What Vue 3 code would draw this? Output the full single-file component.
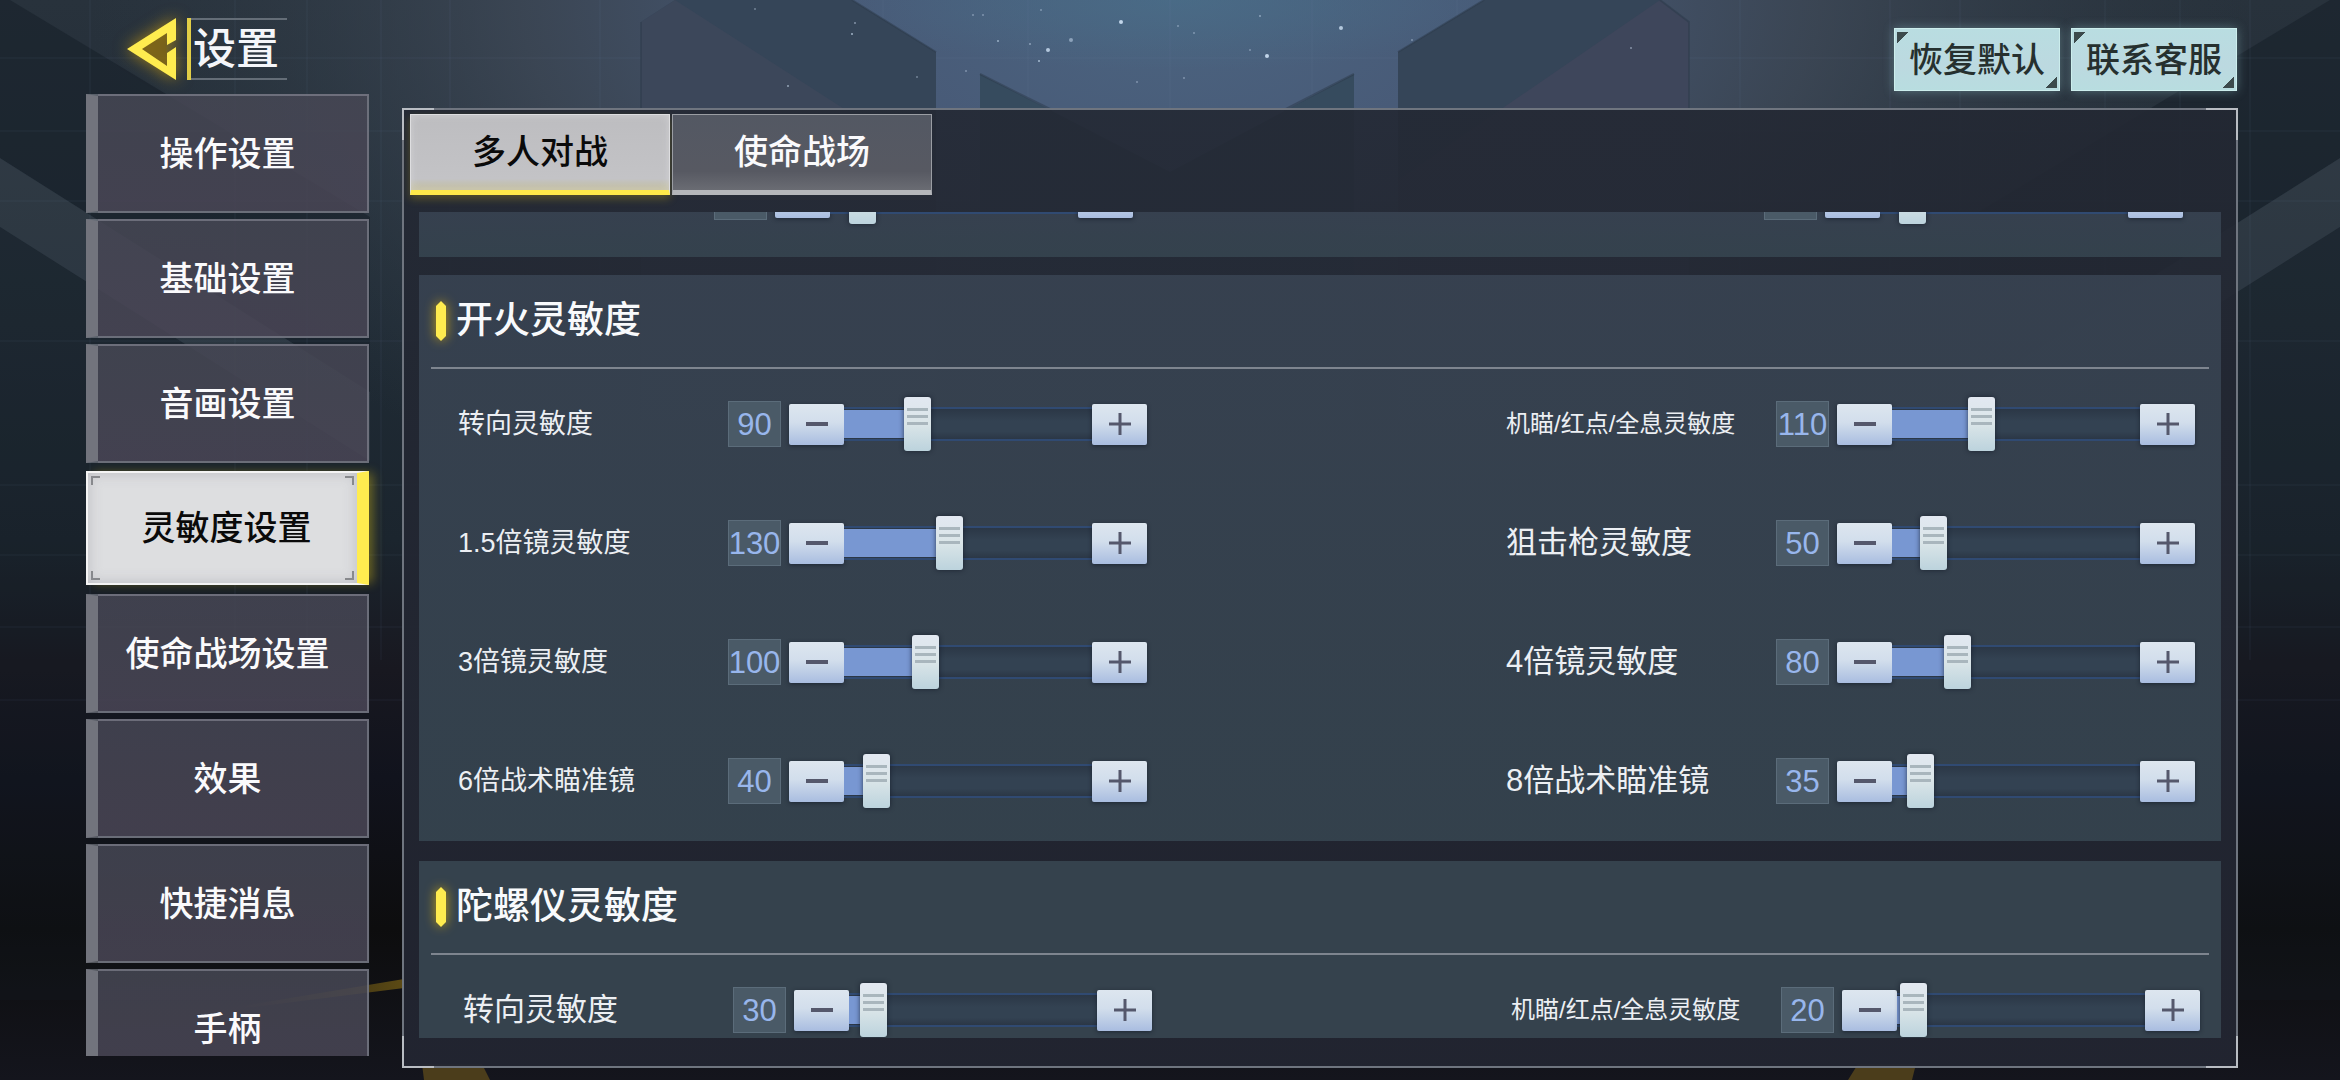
<script setup>
import { reactive, ref } from 'vue'

const MAX = 300

const menu = ['操作设置', '基础设置', '音画设置', '灵敏度设置', '使命战场设置', '效果', '快捷消息', '手柄']
const activeMenu = ref('灵敏度设置')

const tabs = ['多人对战', '使命战场']
const activeTab = ref('多人对战')

const sections = reactive([
  {
    id: 'aim',
    title: '',
    rows: [
      { label: '', value: 40, size: 'md' },
      { label: '', value: 40, size: 'md' }
    ]
  },
  {
    id: 'fire',
    title: '开火灵敏度',
    rows: [
      { label: '转向灵敏度', value: 90, size: 'md' },
      { label: '机瞄/红点/全息灵敏度', value: 110, size: 'sm' },
      { label: '1.5倍镜灵敏度', value: 130, size: 'md' },
      { label: '狙击枪灵敏度', value: 50, size: 'lg' },
      { label: '3倍镜灵敏度', value: 100, size: 'md' },
      { label: '4倍镜灵敏度', value: 80, size: 'lg' },
      { label: '6倍战术瞄准镜', value: 40, size: 'md' },
      { label: '8倍战术瞄准镜', value: 35, size: 'lg' }
    ]
  },
  {
    id: 'gyro',
    title: '陀螺仪灵敏度',
    rows: [
      { label: '转向灵敏度', value: 30, size: 'lg' },
      { label: '机瞄/红点/全息灵敏度', value: 20, size: 'sm' }
    ]
  }
])

const stars = [
  [1121, 22, 2, 0.9], [1341, 28, 2, 0.8], [1267, 56, 2, 0.9], [1048, 50, 2, 0.8], [1071, 40, 2, 0.5],
  [1039, 61, 1, 0.7], [998, 41, 1, 0.6], [1030, 44, 1, 0.5], [852, 34, 1, 0.7], [855, 23, 1, 0.5],
  [788, 86, 1, 0.6], [1260, 16, 1, 0.5], [1178, 26, 1, 0.4], [1194, 33, 1, 0.4], [1250, 50, 1, 0.4],
  [966, 71, 1, 0.4], [1137, 82, 1, 0.4], [1184, 78, 1, 0.4], [1631, 48, 1, 0.5], [983, 15, 1, 0.4],
  [973, 15, 1, 0.4], [1041, 10, 1, 0.4], [1412, 40, 1, 0.4], [755, 9, 1, 0.4], [917, 77, 1, 0.4]
]
const gridX = [90, 235, 307, 381, 450, 600, 740, 883, 1028, 1170, 1312, 1457, 1600, 1740, 1890, 1960, 2105, 2180, 2250]
const gridY = [58, 131, 201, 341, 485, 555, 627, 700]

function step(row, by) {
  row.value = Math.min(MAX, Math.max(0, row.value + by))
}
</script>

<template>
  <div class="page">
    <svg class="scene" viewBox="0 0 2340 1080" preserveAspectRatio="none" aria-hidden="true">
      <defs>
        <linearGradient id="base" x1="0" y1="0" x2="0" y2="1">
          <stop offset="0" stop-color="#28323c" />
          <stop offset="0.3" stop-color="#202b35" />
          <stop offset="0.5" stop-color="#1b252e" />
          <stop offset="0.62" stop-color="#181820" />
          <stop offset="0.72" stop-color="#11131d" />
          <stop offset="0.86" stop-color="#0d0d0e" />
          <stop offset="1" stop-color="#14151d" />
        </linearGradient>
        <radialGradient id="glow" gradientUnits="userSpaceOnUse" cx="0" cy="0" r="1" gradientTransform="translate(1170 0) scale(1080 600)">
          <stop offset="0" stop-color="#4b6480" />
          <stop offset="0.3" stop-color="#485a77" />
          <stop offset="0.6" stop-color="#3f4a59" stop-opacity="0.8" />
          <stop offset="1" stop-color="#303c47" stop-opacity="0" />
        </radialGradient>
        <radialGradient id="sky">
          <stop offset="0" stop-color="#486f8a" stop-opacity="0.6" />
          <stop offset="1" stop-color="#486f8a" stop-opacity="0" />
        </radialGradient>
        <linearGradient id="streak" x1="0" y1="0" x2="1" y2="0">
          <stop offset="0" stop-color="#5c4a14" stop-opacity="0" />
          <stop offset="1" stop-color="#5c4a14" />
        </linearGradient>
      </defs>
      <rect width="2340" height="1080" fill="url(#base)" />
      <rect width="2340" height="600" fill="url(#glow)" />
      <ellipse cx="1180" cy="0" rx="360" ry="70" fill="url(#sky)" />
      <g fill="#161f28" fill-opacity="0.55">
        <path d="M0 0 10 0 370 217 370 392 0 158z" />
        <path d="M2340 0 2330 0 1970 217 1970 392 2340 158z" />
      </g>
      <g fill="#4a5660" fill-opacity="0.28">
        <path d="M0 158 370 392V461L0 227z" />
        <path d="M2340 158 1970 392V461L2340 227z" />
      </g>
      <path d="M0 227 370 461V1000H0z M2340 227 1970 461V1000H2340z" fill="#141b24" fill-opacity="0.25" />
      <g stroke="#6d8fb0" stroke-opacity="0.05" stroke-width="2">
        <path v-for="x in gridX" :key="'x' + x" :d="`M${x} 0V660`" />
        <path v-for="y in gridY" :key="'y' + y" :d="`M0 ${y}H2340`" />
      </g>
      <path d="M641 22 675 0H852L936 52V420H641z" fill="#354558" />
      <path d="M641 22 675 0 936 168V420H641z" fill="#3c475a" />
      <path d="M1689 22 1660 0H1484L1398 52V420H1689z" fill="#354558" />
      <path d="M1689 22 1660 0 1398 180V420H1689z" fill="#3e465b" />
      <path d="M980 74 1170 172 1354 74V420H980z" fill="#364b5e" />
      <g fill="none" stroke="#2c394a" stroke-width="2" stroke-opacity="0.5">
        <path d="M641 22V110M852 0 936 52" />
        <path d="M1689 110V22L1660 0M1484 0 1398 52" />
        <path d="M980 74 1052 110M1354 74 1284 110" />
      </g>
      <circle v-for="(s, i) in stars" :key="i" :cx="s[0]" :cy="s[1]" :r="s[2]" fill="#cfe2f5" :fill-opacity="s[3]" />
      <path d="M230 1008 404 979V988L230 1010z" fill="url(#streak)" />
      <path d="M422 1064H482L490 1080H424z M1858 1064H1916L1912 1080H1848z" fill="#4b3d1b" />
    </svg>

    <header class="top">
      <h1 class="heading">
        <button class="back" type="button" aria-label="返回">
          <svg width="50" height="62" viewBox="0 0 50 62" aria-hidden="true">
            <path d="M39 15 14 31 40 48z" fill="#7a6012" fill-opacity="0.6" />
            <path d="M49 0V22L40 27V15L15 31 40 48V35L49 29V62L0 31z" fill="#ffec4f" />
          </svg>
        </button>
        <span class="title">设置</span>
      </h1>
      <div class="actions">
        <button class="action" type="button">恢复默认</button>
        <button class="action" type="button">联系客服</button>
      </div>
    </header>

    <nav class="side">
      <button
        v-for="item in menu"
        :key="item"
        type="button"
        :class="['side-item', { active: item === activeMenu }]"
        @click="activeMenu = item"
      >{{ item }}</button>
    </nav>

    <main class="panel">
      <div class="tabs" role="tablist">
        <button
          v-for="tab in tabs"
          :key="tab"
          type="button"
          role="tab"
          :aria-selected="tab === activeTab"
          :class="['tab', { active: tab === activeTab }]"
          @click="activeTab = tab"
        >{{ tab }}</button>
      </div>

      <div class="scroll">
        <section v-for="s in sections" :key="s.id" :class="['card', s.id]">
          <h2 v-if="s.title" class="card-title">
            <svg class="mark" width="10" height="40" viewBox="0 0 10 40" aria-hidden="true">
              <path d="M5 0 10 5V35L5 40 0 35V5z" fill="#ffec4f" />
            </svg>
            <span>{{ s.title }}</span>
          </h2>
          <div class="rows">
            <div v-for="(row, i) in s.rows" :key="i" class="row">
              <label :class="['name', row.size]" :for="`${s.id}-${i}`">{{ row.label }}</label>
              <output class="value" :for="`${s.id}-${i}`">{{ s.title ? row.value : '' }}</output>
              <div class="control">
                <button class="step" type="button" aria-label="减少" @click="step(row, -1)">
                  <svg width="22" height="22" viewBox="0 0 22 22" aria-hidden="true">
                    <path d="M0 11H22" stroke="#55586c" stroke-width="4" />
                  </svg>
                </button>
                <div class="track">
                  <div class="fill" :style="{ width: (row.value / 306) * 100 + '%' }"></div>
                  <input
                    :id="`${s.id}-${i}`"
                    v-model.number="row.value"
                    class="range"
                    type="range"
                    min="0"
                    :max="MAX"
                  />
                </div>
                <button class="step" type="button" aria-label="增加" @click="step(row, 1)">
                  <svg width="22" height="22" viewBox="0 0 22 22" aria-hidden="true">
                    <path d="M0 11H22M11 0V22" stroke="#55586c" stroke-width="3" />
                  </svg>
                </button>
              </div>
            </div>
          </div>
        </section>
      </div>
    </main>
  </div>
</template>

<style>
body {
  background: #14171f;
}
</style>

<style scoped>
.page {
  position: relative;
  box-sizing: border-box;
  height: 100vh;
  padding: 0 102px 12px 86px;
  display: grid;
  grid-template-columns: 283px minmax(0, 1fr);
  grid-template-rows: 94px minmax(0, 1fr);
  column-gap: 33px;
  overflow: hidden;
  color: #f4f6fa;
  font-family: "Liberation Sans", "Noto Sans CJK SC", sans-serif;
}

.page button {
  box-sizing: border-box;
  margin: 0;
  padding: 0;
  border: 0;
  font-family: inherit;
  cursor: pointer;
}

.scene {
  position: absolute;
  inset: 0;
  width: 100%;
  height: 100%;
}

.top,
.side,
.panel {
  position: relative;
}

/* Header */
.top {
  grid-column: 1 / -1;
  display: flex;
  justify-content: space-between;
  align-items: flex-start;
}

.heading {
  display: flex;
  gap: 10px;
  margin: 18px 0 0 41px;
}

.page .back {
  display: flex;
  background: none;
  filter: drop-shadow(0 0 8px rgba(255, 190, 0, 0.6));
}

.title {
  box-sizing: border-box;
  width: 100px;
  height: 62px;
  padding-left: 2px;
  border-left: 4px solid #e2cf48;
  background:
    linear-gradient(#646d77, #646d77) top / 100% 2px no-repeat,
    linear-gradient(#646d77, #646d77) bottom / 100% 2px no-repeat;
  font-size: 43px;
  font-weight: 500;
  line-height: 62px;
}

.actions {
  display: flex;
  gap: 11px;
  margin-top: 28px;
  margin-right: 1px;
}

.page .action {
  width: 166px;
  height: 63px;
  border: 1px solid #cdeeed;
  background:
    linear-gradient(135deg, #3c4a4c 50%, transparent 51%) 2px 3px / 11px 11px no-repeat,
    linear-gradient(315deg, #3c4a4c 50%, transparent 51%) calc(100% - 2px) calc(100% - 2px) / 11px 11px no-repeat,
    linear-gradient(#b9dde1, #bcd9e0 60%, #b8dde0);
  box-shadow: 0 0 10px rgba(150, 200, 205, 0.4);
  color: #26302f;
  font-size: 34px;
  font-weight: 500;
  line-height: 60px;
}

/* Side menu */
.side {
  display: flex;
  flex-direction: column;
  gap: 6px;
  margin-bottom: 12px;
  overflow: hidden;
  margin-right: -20px;
  padding-right: 20px;
}

.page .side-item {
  flex: 0 0 119px;
  border: 2px solid rgba(150, 155, 165, 0.5);
  border-left: 12px solid #72747d;
  background: linear-gradient(rgba(70, 71, 84, 0.85), rgba(74, 70, 86, 0.85));
  color: #fafafc;
  font-size: 34px;
  font-weight: 500;
  line-height: 108px;
  padding-right: 10px;
}

.page .side-item.active {
  flex-basis: 114px;
  margin: 2px 0 3px;
  border: 2px solid #f4f4f4;
  border-right: 12px solid #ffec4f;
  background:
    linear-gradient(#85878a, #85878a) 3px 3px / 9px 2px no-repeat,
    linear-gradient(#85878a, #85878a) 3px 3px / 2px 9px no-repeat,
    linear-gradient(#85878a, #85878a) calc(100% - 3px) 3px / 9px 2px no-repeat,
    linear-gradient(#85878a, #85878a) calc(100% - 3px) 3px / 2px 9px no-repeat,
    linear-gradient(#85878a, #85878a) 3px calc(100% - 3px) / 9px 2px no-repeat,
    linear-gradient(#85878a, #85878a) 3px calc(100% - 3px) / 2px 9px no-repeat,
    linear-gradient(#85878a, #85878a) calc(100% - 3px) calc(100% - 3px) / 9px 2px no-repeat,
    linear-gradient(#85878a, #85878a) calc(100% - 3px) calc(100% - 3px) / 2px 9px no-repeat,
    #dddee0;
  box-shadow: inset 0 0 14px rgba(150, 150, 160, 0.45), 6px 0 10px -2px rgba(230, 200, 20, 0.4);
  color: #0a0a0a;
  padding: 0 0 0 8px;
}

/* Panel */
.panel {
  display: flex;
  flex-direction: column;
  margin-top: 14px;
  padding: 4px 6px 28px;
  border: 2px solid #6f757f;
  background: linear-gradient(rgba(35, 40, 51, 0.9), rgba(34, 37, 49, 0.95));
}

.panel::after {
  content: "";
  position: absolute;
  inset: -2px;
  pointer-events: none;
  background:
    linear-gradient(#b9bdc3, #b9bdc3) 0 0 / 32px 2px,
    linear-gradient(#b9bdc3, #b9bdc3) 0 0 / 2px 32px,
    linear-gradient(#b9bdc3, #b9bdc3) 100% 0 / 32px 2px,
    linear-gradient(#b9bdc3, #b9bdc3) 100% 0 / 2px 32px,
    linear-gradient(#b9bdc3, #b9bdc3) 0 100% / 32px 2px,
    linear-gradient(#b9bdc3, #b9bdc3) 0 100% / 2px 32px,
    linear-gradient(#b9bdc3, #b9bdc3) 100% 100% / 32px 2px,
    linear-gradient(#b9bdc3, #b9bdc3) 100% 100% / 2px 32px;
  background-repeat: no-repeat;
}

.tabs {
  display: flex;
  gap: 2px;
}

.page .tab {
  width: 260px;
  height: 81px;
  border: 1px solid #9a9da3;
  border-bottom: 5px solid #b4b6ba;
  background: linear-gradient(#535863, #575962 75%, #6a6c73);
  color: #fafafc;
  font-size: 34px;
  font-weight: 500;
  line-height: 75px;
}

.page .tab.active {
  border-color: #dedee0 #dedee0 #ffe94a;
  background: linear-gradient(#bdbdc0, #c3c3c6 85%, #c2bd9a);
  box-shadow: inset 0 0 8px rgba(225, 225, 228, 0.5), 0 4px 8px rgba(200, 170, 20, 0.3);
  color: #0a0a0a;
}

.scroll {
  flex: 1;
  min-height: 0;
  display: flex;
  flex-direction: column;
  margin: 17px 9px 0;
  overflow: hidden;
}

.card {
  flex: none;
  box-sizing: border-box;
  padding: 0 12px 28px;
  background: linear-gradient(rgba(57, 68, 83, 0.86), rgba(54, 69, 80, 0.88));
}

.card.gyro {
  background: #35424d;
}

.card + .card {
  margin-top: 20px;
}

.card.aim {
  height: 45px;
  display: flex;
  flex-direction: column;
  justify-content: flex-end;
  overflow: hidden;
}

.card.aim + .card {
  margin-top: 18px;
}

.card-title {
  box-sizing: border-box;
  display: flex;
  align-items: center;
  gap: 10px;
  height: 94px;
  margin: 0;
  padding-left: 5px;
  border-bottom: 2px solid #7e858f;
  color: #f8fafc;
  font-size: 37px;
  font-weight: 500;
  line-height: 48px;
}

.mark {
  filter: drop-shadow(0 0 6px rgba(255, 200, 0, 0.7));
}

.rows {
  display: grid;
  grid-template-columns: repeat(2, minmax(0, 689px));
  justify-content: space-between;
  row-gap: 55px;
  padding: 23px 14px 0 27px;
}

.aim .rows {
  padding: 0 26px 0 13px;
}

.gyro .rows {
  padding: 23px 9px 0 32px;
}

.row {
  display: flex;
  align-items: center;
  height: 64px;
}

.name {
  flex: 1;
  white-space: nowrap;
  color: #eceff3;
  line-height: 40px;
}

.name.sm {
  font-size: 24px;
}

.name.md {
  font-size: 27px;
}

.name.lg {
  font-size: 31px;
}

.value {
  box-sizing: border-box;
  display: flex;
  justify-content: center;
  width: 53px;
  height: 46px;
  margin-right: 8px;
  border: 1px solid #5b6c7a;
  background: #4a5a67;
  color: #98b6ec;
  font-size: 31px;
  line-height: 45px;
}

.control {
  display: flex;
  align-items: center;
}

.page .step {
  display: flex;
  align-items: center;
  justify-content: center;
  width: 55px;
  height: 41px;
  border-radius: 2px;
  background: linear-gradient(#dde6ef, #d2deec 45%, #a9bde0);
  box-shadow: 0 1px 4px rgba(15, 22, 35, 0.6);
}

.track {
  box-sizing: border-box;
  display: grid;
  align-items: center;
  width: 248px;
  height: 34px;
  border: solid #304a72;
  border-width: 2px 0;
  background: linear-gradient(#2b3746, #334252 40%, #334252 75%, #2b3746);
}

.fill,
.range {
  grid-area: 1 / 1;
}

.fill {
  height: 28px;
  background: #7897d2;
}

.range {
  appearance: none;
  position: relative;
  width: calc(100% + 22px);
  height: 54px;
  margin: -12px 0 -12px -13px;
  background: none;
}

.range::-webkit-slider-thumb {
  appearance: none;
  width: 27px;
  height: 54px;
  border-radius: 3px;
  background:
    linear-gradient(#a9b6bd, #a9b6bd) 3px 11px / 21px 3px no-repeat,
    linear-gradient(#a9b6bd, #a9b6bd) 3px 18px / 21px 3px no-repeat,
    linear-gradient(#a9b6bd, #a9b6bd) 3px 25px / 21px 3px no-repeat,
    linear-gradient(#e2e8f1, #dae5e8 50%, #bcd3dd);
  box-shadow: 0 0 5px rgba(15, 22, 35, 0.7);
}
</style>
